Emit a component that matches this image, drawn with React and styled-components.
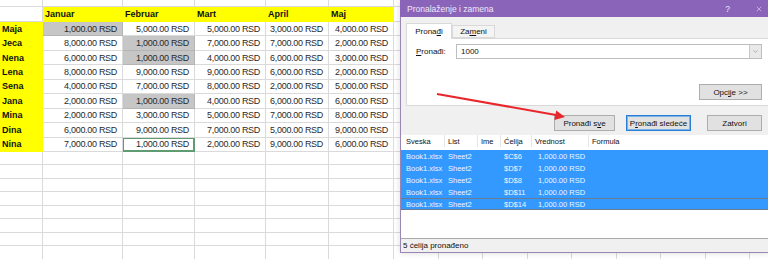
import styled, { createGlobalStyle } from "styled-components";
import { ChevronDown, X } from "lucide-react";

const GlobalStyle = createGlobalStyle`
  html, body {
    margin: 0;
    padding: 0;
  }
  body {
    background: #ffffff;
    font-family: "Liberation Sans", Arial, sans-serif;
    color: #000;
  }
`;

const Page = styled.div`
  position: relative;
  width: 768px;
  height: 259px;
  overflow: hidden;
  background: #fff;
`;

const Sheet = styled.div`
  display: grid;
  grid-template-columns: 43px 80px 72px 71px 63px 65px repeat(9, 44.5px);
  grid-template-rows: 7px 15px repeat(9, 14.44px) repeat(8, 13.5px);
`;

const Cell = styled.div`
  box-sizing: border-box;
  display: flex;
  align-items: center;
  justify-content: ${(p) => (p.$right ? "flex-end" : "flex-start")};
  padding: ${(p) => (p.$right ? "0 5px 0 0" : "0 2px")};
  background: ${(p) => p.$fill || "#fff"};
  border-right: 1px solid ${(p) => p.$line || "#dadada"};
  border-bottom: 1px solid ${(p) => p.$line || "#dadada"};
  box-shadow: ${(p) => (p.$active ? "inset 0 0 0 1px #5f9c72" : "none")};
  font-size: 9px;
  letter-spacing: ${(p) => (p.$bold ? "0" : "-0.3px")};
  font-weight: ${(p) => (p.$bold ? 700 : 400)};
  color: ${(p) => (p.$bold ? "#111" : "#2a2a2a")};
  white-space: nowrap;
  overflow: hidden;
`;

/* dialog window */
const Dialog = styled.div`
  position: absolute;
  left: 400px;
  top: 0;
  width: 369px;
  height: 253px;
  box-sizing: border-box;
  display: flex;
  flex-direction: column;
  background: #f0f0f0;
  border: 1px solid #9a86b4;
  border-top: none;
  font-size: 8px;
  color: #111;
  box-shadow: 0 0 6px rgba(0, 0, 0, 0.15);
`;

const TitleBar = styled.div`
  height: 17px;
  margin: 0 -1px;
  display: flex;
  align-items: center;
  justify-content: space-between;
  padding: 0 6px 0 7px;
  background: #8a64b9;
  color: #efe8f8;
  font-size: 8.5px;
`;

const TitleButtons = styled.div`
  display: flex;
  align-items: center;
  gap: 25px;
  font-size: 8.5px;
`;

const Top = styled.div`
  display: flex;
  flex-direction: column;
  padding: 6px 0 4px 5px;
`;

const Tabs = styled.div`
  display: flex;
  align-items: flex-end;
  height: 15px;
`;

const Tab = styled.div`
  box-sizing: border-box;
  height: ${(p) => (p.$active ? "16px" : "13px")};
  width: ${(p) => p.$w}px;
  display: flex;
  align-items: center;
  justify-content: center;
  background: ${(p) => (p.$active ? "#fff" : "#f4f4f4")};
  border: 1px solid #d9d9d9;
  border-bottom: ${(p) => (p.$active ? "none" : "1px solid #d9d9d9")};
  margin-bottom: ${(p) => (p.$active ? "-1px" : "0")};
  position: relative;
  z-index: ${(p) => (p.$active ? 1 : 0)};
`;

const Panel = styled.div`
  box-sizing: border-box;
  height: 68px;
  background: #fff;
  border: 1px solid #d9d9d9;
  border-right: none;
  padding: 5px 6px 0 9px;
  display: flex;
  flex-direction: column;
`;

const FindRow = styled.div`
  display: flex;
  align-items: center;
  height: 15px;
`;

const Label = styled.span`
  width: 40px;
`;

const Combo = styled.div`
  flex: 1;
  box-sizing: border-box;
  height: 15px;
  display: flex;
  align-items: center;
  border: 1px solid #bdbdbd;
  padding-left: 4px;
`;

const ComboText = styled.span`
  flex: 1;
`;

const ComboArrow = styled.div`
  box-sizing: border-box;
  width: 12px;
  height: 13px;
  display: flex;
  align-items: center;
  justify-content: center;
  background: #e9e9e9;
  border-left: 1px solid #c8c8c8;
  color: #666;
`;

const PanelFooter = styled.div`
  display: flex;
  justify-content: flex-end;
  margin-top: 25px;
`;

const Button = styled.div`
  box-sizing: border-box;
  width: ${(p) => p.$w}px;
  height: 16px;
  display: flex;
  align-items: center;
  justify-content: center;
  background: #e1e1e1;
  border: 1px solid ${(p) => (p.$primary ? "#2a7fd4" : "#adadad")};
  box-shadow: ${(p) => (p.$primary ? "inset 0 0 0 1px #7ab3ea" : "none")};
  margin-left: ${(p) => p.$gap || 0}px;
`;

const ButtonRow = styled.div`
  display: flex;
  justify-content: flex-end;
  padding-right: 6px;
  margin-top: 9px;
`;

const Results = styled.div`
  flex: 1;
  background: #fff;
  display: flex;
  flex-direction: column;
  font-size: 7.5px;
`;

const ResultGrid = styled.div`
  display: grid;
  grid-template-columns: 44px 33px 23px 31px 57px 1fr;
  grid-auto-rows: 12px;
  background: ${(p) => (p.$head ? "#fff" : "#3399ff")};
  color: ${(p) => (p.$head ? "#111" : "#eef5ff")};
  box-shadow: ${(p) =>
    p.$focus ? "inset 0 1px #6a7c94, inset 0 -1px #6a7c94" : "none"};
  height: ${(p) => (p.$head ? "15px" : "12px")};
`;

const ResultCell = styled.div`
  display: flex;
  align-items: center;
  padding-left: ${(p) => p.$pad || 4}px;
  border-right: ${(p) => (p.$sep ? "1px solid #e6e6e6" : "none")};
  white-space: nowrap;
  overflow: hidden;
`;

const StatusBar = styled.div`
  height: 14px;
  box-sizing: border-box;
  border-top: 1px solid #a9a9a9;
  display: flex;
  align-items: center;
  padding-left: 2px;
  font-size: 8px;
`;

const Arrow = styled.svg`
  position: absolute;
  left: 0;
  top: 0;
  pointer-events: none;
`;

const months = ["Januar", "Februar", "Mart", "April", "Maj"];
const data = [
  ["Maja", [1, 5, 5, 3, 4]],
  ["Jeca", [8, 1, 7, 7, 2]],
  ["Nena", [6, 1, 4, 6, 3]],
  ["Lena", [8, 9, 9, 6, 2]],
  ["Sena", [4, 7, 8, 2, 5]],
  ["Jana", [2, 1, 4, 6, 6]],
  ["Mina", [2, 3, 5, 7, 8]],
  ["Dina", [6, 9, 7, 5, 9]],
  ["Nina", [7, 1, 2, 9, 6]],
];
const marks = { "0-0": "sel", "1-1": "sel", "2-1": "sel", "5-1": "sel", "8-1": "active" };
const found = ["$C$6", "$D$7", "$D$8", "$D$11", "$D$14"];
const COLS = 15;
const YELLOW = "#ffff00";

const fmt = (n) => `${n},000.00 RSD`;

function Spreadsheet() {
  const cells = [];
  for (let c = 0; c < COLS; c++) cells.push(<Cell key={`t${c}`} />);
  for (let c = 0; c < COLS; c++) {
    const m = months[c - 1];
    cells.push(
      m ? (
        <Cell key={`h${c}`} $fill={YELLOW} $line={YELLOW} $bold>
          {m}
        </Cell>
      ) : (
        <Cell key={`h${c}`} />
      )
    );
  }
  data.forEach(([name, vals], r) => {
    cells.push(
      <Cell key={`n${r}`} $fill={YELLOW} $line={YELLOW} $bold>
        {name}
      </Cell>
    );
    vals.forEach((v, c) => {
      const mark = marks[`${r}-${c}`];
      cells.push(
        <Cell
          key={`v${r}-${c}`}
          $right
          $fill={mark === "sel" ? "#c6c6c6" : undefined}
          $line={mark === "sel" ? "#b4b4b4" : mark === "active" ? "#5f9c72" : undefined}
          $active={mark === "active"}
        >
          {fmt(v)}
        </Cell>
      );
    });
    for (let c = 6; c < COLS; c++) cells.push(<Cell key={`e${r}-${c}`} />);
  });
  for (let r = 0; r < 8; r++)
    for (let c = 0; c < COLS; c++) cells.push(<Cell key={`b${r}-${c}`} />);
  return <Sheet>{cells}</Sheet>;
}

function FindDialog() {
  return (
    <Dialog>
      <TitleBar>
        <span>Pronalaženje i zamena</span>
        <TitleButtons>
          <span>?</span>
          <X size={8} strokeWidth={1.6} />
        </TitleButtons>
      </TitleBar>
      <Top>
        <Tabs>
          <Tab $active $w={46}>
            <span>
              Prona<u>đ</u>i
            </span>
          </Tab>
          <Tab $w={43}>
            <span>
              Za<u>m</u>eni
            </span>
          </Tab>
        </Tabs>
        <Panel>
          <FindRow>
            <Label>
              <u>P</u>ronađi:
            </Label>
            <Combo>
              <ComboText>1000</ComboText>
              <ComboArrow>
                <ChevronDown size={7} strokeWidth={1.5} />
              </ComboArrow>
            </Combo>
          </FindRow>
          <PanelFooter>
            <Button $w={63}>
              Opc<u>i</u>je &gt;&gt;
            </Button>
          </PanelFooter>
        </Panel>
        <ButtonRow>
          <Button $w={61}>
            Pronađi s<u>v</u>e
          </Button>
          <Button $w={65} $gap={11} $primary>
            P<u>r</u>onađi sledeće
          </Button>
          <Button $w={55} $gap={16}>
            Zatvori
          </Button>
        </ButtonRow>
      </Top>
      <Results>
        <ResultGrid $head>
          <ResultCell $sep $pad={5}>Sveska</ResultCell>
          <ResultCell $sep $pad={3}>List</ResultCell>
          <ResultCell $sep $pad={3}>Ime</ResultCell>
          <ResultCell $sep $pad={3}>Ćelija</ResultCell>
          <ResultCell $sep $pad={3}>Vrednost</ResultCell>
          <ResultCell $pad={3}>Formula</ResultCell>
        </ResultGrid>
        {found.map((ref, i) => (
          <ResultGrid key={ref} $focus={i === found.length - 1}>
            <ResultCell $pad={5}>Book1.xlsx</ResultCell>
            <ResultCell $pad={3}>Sheet2</ResultCell>
            <ResultCell />
            <ResultCell $pad={3}>{ref}</ResultCell>
            <ResultCell $pad={6}>1,000.00 RSD</ResultCell>
            <ResultCell />
          </ResultGrid>
        ))}
      </Results>
      <StatusBar>5 ćelija pronađeno</StatusBar>
    </Dialog>
  );
}

export default function App() {
  return (
    <Page>
      <GlobalStyle />
      <Spreadsheet />
      <FindDialog />
      <Arrow width="768" height="259" viewBox="0 0 768 259">
        <line x1="437" y1="94" x2="556" y2="115" stroke="#e8262b" strokeWidth="2" />
        <polygon points="565,117 554.4,120 556.2,110.6" fill="#e8262b" />
      </Arrow>
    </Page>
  );
}
